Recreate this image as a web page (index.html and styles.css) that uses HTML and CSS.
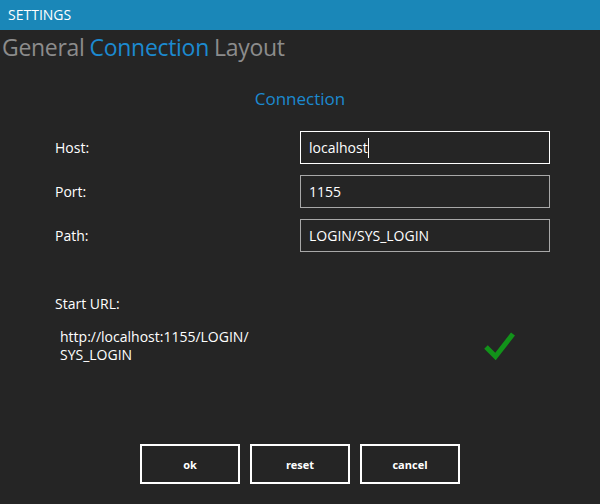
FILE: index.html
```html
<!DOCTYPE html>
<html>
<head>
<meta charset="utf-8">
<link rel="stylesheet" href="styles.css">
</head>
<body>
<div class="window">
  <div class="titlebar">SETTINGS</div>
  <div class="tabs">
    <span class="tab">General</span>
    <span class="tab active">Connection</span>
    <span class="tab">Layout</span>
  </div>
  <h2 class="heading">Connection</h2>
  <div class="form">
    <div class="row">
      <label class="label">Host:</label>
      <div class="input focused">localhost<span class="caret"></span></div>
    </div>
    <div class="row">
      <label class="label">Port:</label>
      <div class="input">1155</div>
    </div>
    <div class="row">
      <label class="label">Path:</label>
      <div class="input">LOGIN/SYS_LOGIN</div>
    </div>
  </div>
  <div class="start-label">Start URL:</div>
  <div class="url-row">
    <div class="url">http://localhost:1155/LOGIN/<br>SYS_LOGIN</div>
    <svg class="check" width="32" height="30" viewBox="0 0 32 30">
      <polyline points="2,16 11.5,25.5 29,3" fill="none" stroke="#12921a" stroke-width="5"/>
    </svg>
  </div>
  <div class="buttons">
    <button class="btn">ok</button>
    <button class="btn">reset</button>
    <button class="btn">cancel</button>
  </div>
</div>
</body>
</html>
```
FILE: styles.css
```css
* { box-sizing: border-box; }
html, body {
  margin: 0;
  padding: 0;
  background: #252525;
}
body {
  font-family: "Open Sans", "Noto Sans", sans-serif;
  color: #ffffff;
}
.window {
  width: 600px;
  height: 504px;
  display: flex;
  flex-direction: column;
  background: #252525;
}
.titlebar {
  height: 30px;
  background: #1a87b8;
  color: #ffffff;
  font-size: 14px;
  line-height: 30px;
  padding-left: 8px;
}
.tabs {
  display: flex;
  gap: 5px;
  padding-left: 2px;
  height: 38px;
  align-items: center;
  margin-top: -2px;
}
.tab {
  font-size: 23px;
  color: #8c8c8c;
  letter-spacing: -0.3px;
}
.tab.active { color: #1c8ad0; }
.heading {
  margin: 21px 0 0 0;
  font-weight: normal;
  font-size: 17px;
  color: #1c8ad0;
  text-align: center;
  height: 24px;
  line-height: 24px;
}
.form {
  display: flex;
  flex-direction: column;
  gap: 11px;
  margin-top: 20px;
  padding-left: 55px;
}
.row {
  display: flex;
  align-items: center;
  height: 33px;
}
.label {
  width: 245px;
  font-size: 14px;
}
.input {
  width: 250px;
  height: 33px;
  border: 1px solid #a8a8a8;
  font-size: 14px;
  line-height: 31px;
  padding-left: 8px;
  display: flex;
  align-items: center;
}
.input.focused { border-color: #ffffff; }
.caret {
  display: inline-block;
  width: 1px;
  height: 20px;
  background: #ffffff;
}
.start-label {
  margin-top: 42px;
  padding-left: 55px;
  font-size: 14px;
  line-height: 20px;
}
.url-row {
  display: flex;
  align-items: center;
  margin-top: 14px;
  padding-left: 60px;
}
.url {
  width: 424px;
  font-size: 14px;
  line-height: 18px;
}
.check {
  display: block;
  margin-top: 0;
}
.buttons {
  display: flex;
  justify-content: center;
  gap: 10px;
  margin-top: 80px;
}
.btn {
  width: 100px;
  height: 40px;
  background: #252525;
  border: 2px solid #ffffff;
  color: #ffffff;
  font-family: "Open Sans", "Noto Sans", sans-serif;
  font-weight: bold;
  font-size: 11px;
  padding: 0;
}
```
